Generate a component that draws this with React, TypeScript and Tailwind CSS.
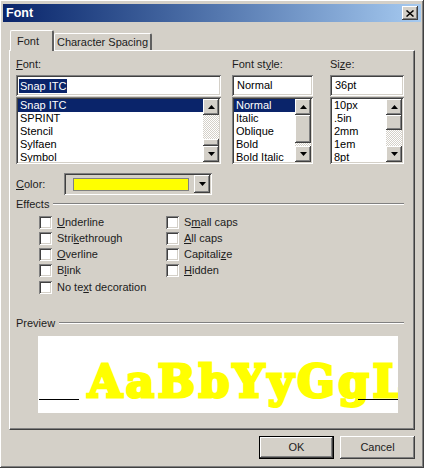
import type { ReactNode } from "react";

const raised =
  "shadow-[inset_-1px_-1px_#404040,inset_1px_1px_#ffffff,inset_-2px_-2px_#808080,inset_2px_2px_#d4d0c8]";
const sunken =
  "shadow-[inset_1px_1px_#808080,inset_-1px_-1px_#ffffff,inset_2px_2px_#404040,inset_-2px_-2px_#d4d0c8]";

function Arrow({ down = false }: { down?: boolean }) {
  return (
    <svg width="7" height="4" viewBox="0 0 7 4" className="block">
      <path d={down ? "M0 0h7L3.5 4z" : "M3.5 0L7 4H0z"} fill="#000000" />
    </svg>
  );
}

function ScrollButton({ down = false }: { down?: boolean }) {
  return (
    <div className={`flex h-[16px] w-[16px] shrink-0 items-center justify-center bg-[#d4d0c8] ${raised}`}>
      <Arrow down={down} />
    </div>
  );
}

function ScrollBar({ top, size }: { top: number; size: number }) {
  return (
    <div className="flex h-full w-[16px] shrink-0 flex-col">
      <ScrollButton />
      <div className="flex flex-1 flex-col bg-[repeating-conic-gradient(#ffffff_0_25%,#d4d0c8_0_50%)] bg-[length:2px_2px]">
        <div style={{ height: top }} />
        <div className={`w-[16px] bg-[#d4d0c8] ${raised}`} style={{ height: size }} />
      </div>
      <ScrollButton down />
    </div>
  );
}

function ListBox({
  items,
  thumbTop,
  thumbSize,
  selected = false,
}: {
  items: string[];
  thumbTop: number;
  thumbSize: number;
  selected?: boolean;
}) {
  return (
    <div className={`mt-px flex h-[67px] bg-white p-[2px] ${sunken}`}>
      <div className="min-w-0 flex-1 overflow-hidden">
        {items.map((item, index) => (
          <div
            key={item}
            className={`h-[13px] pl-[2px] leading-[13px] ${selected && index === 0 ? "bg-[#0a246a] text-white" : "text-black"}`}
          >
            {item}
          </div>
        ))}
      </div>
      <ScrollBar top={thumbTop} size={thumbSize} />
    </div>
  );
}

function TextBox({ value, selected = false }: { value: string; selected?: boolean }) {
  return (
    <div className={`flex h-[21px] items-center bg-white px-[2px] ${sunken}`}>
      {selected ? (
        <span className="ml-px bg-[#0a246a] px-px leading-[14px] text-white">{value}</span>
      ) : (
        <span className="ml-[3px] text-black">{value}</span>
      )}
    </div>
  );
}

function Field({
  label,
  width,
  children,
}: {
  label: ReactNode;
  width: string;
  children: ReactNode;
}) {
  return (
    <div className={`flex flex-col ${width}`}>
      <div className="mb-[4px] h-[13px] leading-[13px]">{label}</div>
      {children}
    </div>
  );
}

function SectionTitle({ title, className = "" }: { title: string; className?: string }) {
  return (
    <div className={`flex h-[14px] items-center gap-[4px] leading-[14px] ${className}`}>
      <span>{title}</span>
      <div className="h-[2px] flex-1 border-t border-b border-t-[#808080] border-b-white" />
    </div>
  );
}

function Check({ label, className = "" }: { label: ReactNode; className?: string }) {
  return (
    <div className={`flex h-[13px] items-center gap-[5px] ${className}`}>
      <div className={`h-[13px] w-[13px] shrink-0 bg-white ${sunken}`} />
      <span className="leading-[13px]">{label}</span>
    </div>
  );
}

function DialogButton({ children, primary = false }: { children: ReactNode; primary?: boolean }) {
  return (
    <div className={`h-[23px] w-[75px] ${primary ? "border border-black" : ""}`}>
      <div className={`flex h-full w-full items-center justify-center bg-[#d4d0c8] ${raised}`}>
        {children}
      </div>
    </div>
  );
}

export default function App() {
  return (
    <div
      className={`flex h-[468px] w-[424px] flex-col bg-[#d4d0c8] px-[3px] pt-[4px] text-[11px] text-[#1c1c1c] ${raised}`}
      style={{ fontFamily: '"Liberation Sans", Arial, sans-serif' }}
    >
      <div className="flex h-[18px] items-center justify-between bg-gradient-to-r from-[#0a246a] to-[#a6caf0] pl-[3px] pr-[3px]">
        <span className="text-[12.5px] font-bold text-white">Font</span>
        <div className={`flex h-[14px] w-[16px] items-center justify-center bg-[#d4d0c8] ${raised}`}>
          <svg width="8" height="7" viewBox="0 0 8 7" className="block">
            <path d="M0.5 0.5L7.5 6.5M7.5 0.5L0.5 6.5" stroke="#000000" strokeWidth="1.5" />
          </svg>
        </div>
      </div>

      <div className="flex h-[28px] items-end pl-[7px] pt-[7px]">
        <div className="relative z-10 -mb-px flex h-[21px] w-[44px] items-center rounded-t-[2px] border-l border-t border-r-2 border-l-white border-t-white border-r-[#606060] bg-[#d4d0c8] pl-[6px]">
          Font
        </div>
        <div className="flex h-[17px] w-[98px] items-center justify-center whitespace-nowrap rounded-t-[2px] border-l border-t border-r-2 border-l-white border-t-white border-r-[#606060] bg-[#d4d0c8]">
          Character Spacing
        </div>
      </div>

      <div className="mx-[6px] flex h-[380px] flex-col border border-l-white border-t-white border-r-[#404040] border-b-[#404040] pl-[6px] pr-[10px] pt-[7px] shadow-[inset_-1px_-1px_#808080]">
        <div className="flex">
          <Field width="w-[205px]" label={<><u>F</u>ont:</>}>
            <TextBox value="Snap ITC" selected />
            <ListBox
              items={["Snap ITC", "SPRINT", "Stencil", "Sylfaen", "Symbol"]}
              thumbTop={24}
              thumbSize={7}
              selected
            />
          </Field>
          <Field width="ml-[11px] w-[81px]" label={<>Font st<u>y</u>le:</>}>
            <TextBox value="Normal" />
            <ListBox
              items={["Normal", "Italic", "Oblique", "Bold", "Bold Italic"]}
              thumbTop={0}
              thumbSize={28}
              selected
            />
          </Field>
          <Field width="ml-[17px] w-[74px]" label={<>Si<u>z</u>e:</>}>
            <TextBox value="36pt" />
            <ListBox items={["10px", ".5in", "2mm", "1em", "8pt"]} thumbTop={0} thumbSize={15} />
          </Field>
        </div>

        <div className="mt-[9px] flex h-[22px] items-center">
          <span className="w-[48px]">
            <u>C</u>olor:
          </span>
          <div className={`flex h-full w-[148px] items-center justify-between bg-[#d4d0c8] p-[2px] ${sunken}`}>
            <div className="ml-[7px] h-[13px] w-[116px] border border-[#808080] bg-[#ffff00]" />
            <div className={`flex h-[18px] w-[16px] items-center justify-center bg-[#d4d0c8] ${raised}`}>
              <Arrow down />
            </div>
          </div>
        </div>

        <SectionTitle title="Effects" className="mt-[2px]" />

        <div className="mt-[5px] flex pl-[23px]">
          <div className="flex w-[127px] flex-col">
            <Check label={<><u>U</u>nderline</>} />
            <Check className="mt-[3px]" label={<>Stri<u>k</u>ethrough</>} />
            <Check className="mt-[3px]" label={<><u>O</u>verline</>} />
            <Check className="mt-[3px]" label={<>B<u>l</u>ink</>} />
            <Check className="mt-[4px]" label={<>No te<u>x</u>t decoration</>} />
          </div>
          <div className="flex flex-col">
            <Check label={<>S<u>m</u>all caps</>} />
            <Check className="mt-[3px]" label={<><u>A</u>ll caps</>} />
            <Check className="mt-[3px]" label={<>Capitali<u>z</u>e</>} />
            <Check className="mt-[3px]" label={<><u>H</u>idden</>} />
          </div>
        </div>

        <SectionTitle title="Preview" className="mt-[22px]" />

        <div className="relative ml-[22px] mt-[6px] flex h-[77px] w-[360px] items-baseline overflow-hidden bg-white pl-[50px] pt-[23px]">
          <span
            className="whitespace-nowrap text-[44px] font-bold leading-[46px] tracking-[3.6px] text-[#ffff00] [-webkit-text-stroke:3px_#ffff00]"
            style={{ fontFamily: '"DejaVu Serif", serif' }}
          >
            AaBbYyGgL
          </span>
          <div className="absolute bottom-[13px] left-px h-px w-[40px] bg-black" />
          <div className="absolute bottom-[13px] right-0 h-px w-[40px] bg-black" />
        </div>
      </div>

      <div className="flex justify-end gap-[6px] pr-[6px] pt-[6px]">
        <DialogButton primary>OK</DialogButton>
        <DialogButton>Cancel</DialogButton>
      </div>
    </div>
  );
}
